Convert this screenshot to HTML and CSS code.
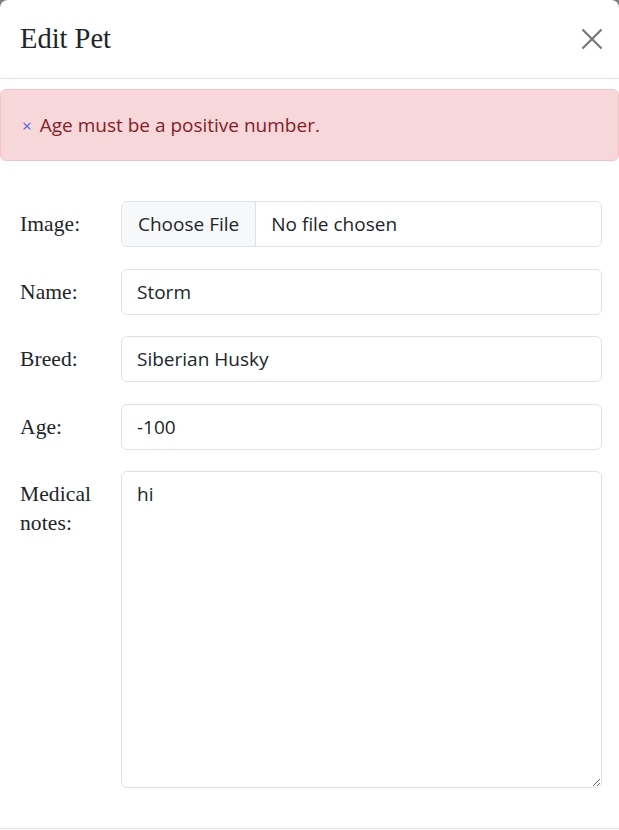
FILE: index.html
```html
<!DOCTYPE html>
<html lang="en">
<head>
<meta charset="utf-8">
<title>Edit Pet</title>
<link rel="stylesheet" href="styles.css">
</head>
<body>
<div class="modal">
  <header class="modal-header">
    <h5 class="modal-title">Edit Pet</h5>
    <button class="btn-close" type="button" aria-label="Close">
      <svg width="22" height="22" viewBox="0 0 22 22" aria-hidden="true"><path d="M1.5 1.5 L20.5 20.5 M20.5 1.5 L1.5 20.5" stroke="currentColor" stroke-width="2.2" fill="none"/></svg>
    </button>
  </header>
  <div class="alert"><span class="alert-x">×</span><span>Age must be a positive number.</span></div>
  <form class="form">
    <label class="label" for="img">Image:</label>
    <input class="control file" id="img" type="file">
    <label class="label" for="name">Name:</label>
    <input class="control" id="name" type="text" value="Storm">
    <label class="label" for="breed">Breed:</label>
    <input class="control" id="breed" type="text" value="Siberian Husky">
    <label class="label" for="age">Age:</label>
    <input class="control" id="age" type="text" value="-100">
    <label class="label" for="notes">Medical notes:</label>
    <textarea class="control notes" id="notes">hi</textarea>
  </form>
  <footer class="modal-footer"></footer>
</div>
</body>
</html>
```
FILE: styles.css
```css
* { box-sizing: border-box; }
html, body { margin: 0; height: 100%; }
body {
  background: #808080;
  font-family: "Open Sans", "Noto Sans", sans-serif;
  color: #212529;
  overflow: hidden;
}
.modal {
  background: #fff;
  border-radius: 8px 8px 0 0;
  width: 100%;
  height: 100vh;
  overflow: hidden;
}
.modal-header {
  height: 79px;
  border-bottom: 1px solid #dee2e6;
  display: flex;
  align-items: center;
  justify-content: space-between;
  padding: 0 16px 0 20px;
}
.modal-title {
  margin: 0;
  font-family: "Liberation Serif", serif;
  font-weight: 400;
  font-size: 28.5px;
  line-height: 1.2;
  color: #212529;
}
.btn-close {
  border: 0;
  background: none;
  padding: 0;
  width: 22px;
  height: 22px;
  color: #777;
  display: flex;
  cursor: pointer;
}
.alert {
  margin-top: 10px;
  height: 72px;
  border: 1px solid #f5c2c7;
  border-radius: 6px;
  background: #f8d7da;
  color: #842029;
  font-size: 19px;
  display: flex;
  align-items: center;
  padding: 0 21px;
}
.alert-x { color: #4a64e8; font-size: 17px; margin-right: 8px; }
.form {
  display: grid;
  grid-template-columns: 101px 1fr;
  row-gap: 21.5px;
  padding: 40px 17px 40px 20px;
  align-items: start;
}
.label {
  font-family: "Liberation Serif", serif;
  font-size: 21.5px;
  line-height: 28.5px;
  padding-top: 9px;
  color: #212529;
  letter-spacing: 0.1px;
}
.control {
  height: 46px;
  border: 1px solid #dee2e6;
  border-radius: 6px;
  padding: 0 15px;
  font-family: "Open Sans", "Noto Sans", sans-serif;
  font-size: 19px;
  color: #212529;
  background: #fff;
  width: 100%;
  margin: 0;
}
.file {
  padding: 0;
  overflow: hidden;
  line-height: 44px;
}
.file::file-selector-button {
  height: 44px;
  margin: 0 15px 0 0;
  padding: 0 16px;
  border: 0;
  border-right: 1px solid #dee2e6;
  background: #f7f8fa;
  color: #212529;
  font-family: "Open Sans", "Noto Sans", sans-serif;
  font-size: 19px;
}
.notes {
  height: 317px;
  padding: 8px 15px;
  line-height: 28.5px;
  resize: vertical;
}
.modal-footer {
  border-top: 1px solid #dee2e6;
  height: 60px;
}
```
